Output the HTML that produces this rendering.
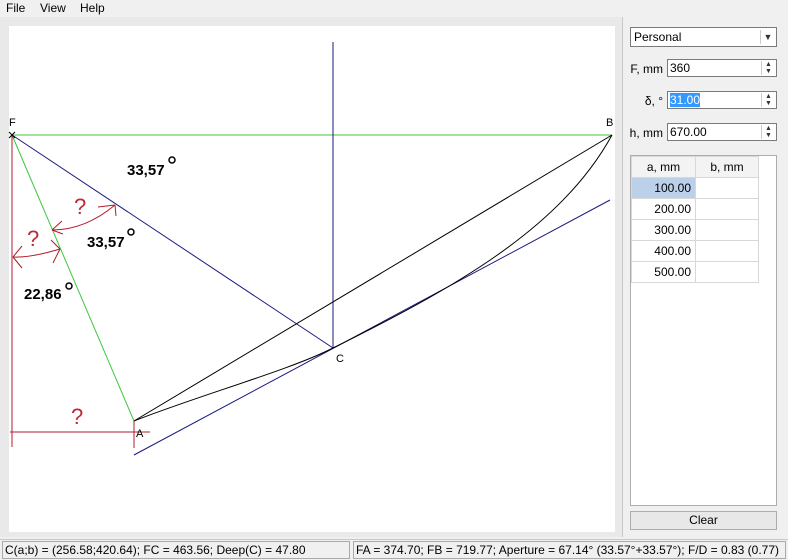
<!DOCTYPE html>
<html><head><style>
body{margin:0;width:788px;height:560px;overflow:hidden;background:#f0f0f0;font-family:"Liberation Sans",sans-serif;font-size:12px;position:relative}
.a{position:absolute}
.menu span{position:absolute;top:1px;font-size:12px}
.inp{position:absolute;background:#fff;border:1px solid #7a7a7a;height:18px;box-sizing:border-box;font-size:12px;line-height:16px;padding-left:2px}
.spin{position:absolute;right:1px;top:1px;width:13px;height:14px;border-left:1px solid #ccc;font-size:7px;line-height:7px;text-align:center;color:#333}
.lbl{position:absolute;font-size:12px;width:60px;text-align:right;left:603px}
table{border-collapse:collapse;font-size:12px}
td{border:1px solid #d8d8d8;height:21px;padding:0 4px;box-sizing:border-box}
</style></head><body>
<div class="menu"><span style="left:6px">File</span><span style="left:40px">View</span><span style="left:80px">Help</span></div>
<div class="a" style="left:0;top:17px;width:622px;height:520px;background:#e9e9e9"></div>
<div class="a" style="left:9px;top:26px;width:606px;height:506px;background:#fff"></div>
<div class="a" style="left:622px;top:17px;width:1px;height:520px;background:#c8c8c8"></div>
<svg class="a" style="left:0;top:0" width="622" height="540" font-family="Liberation Sans,sans-serif">
<line x1="12" y1="135" x2="612" y2="135" stroke="#3cc83c"/>
<line x1="12" y1="135" x2="134" y2="421" stroke="#3cc83c"/>
<line x1="12" y1="135" x2="333" y2="348" stroke="#1a1a80"/>
<line x1="333" y1="42" x2="333" y2="348" stroke="#1a1a80"/>
<line x1="134" y1="455" x2="610" y2="200" stroke="#1a1a80"/>
<line x1="134" y1="421" x2="612" y2="135" stroke="#000"/>
<path d="M134,421 C200,395 290,370 333,348 C450,290 560,230 612,135" fill="none" stroke="#000"/>
<line x1="12" y1="135" x2="12" y2="447" stroke="#b01c2c"/>
<line x1="10" y1="432" x2="150" y2="432" stroke="#b01c2c"/>
<line x1="134" y1="421" x2="134" y2="448" stroke="#b01c2c"/>
<path d="M13,257 Q30,258 60,249 M13,257 L22,246 M13,257 L22,268 M60,249 L51,240 M60,249 L53,263" fill="none" stroke="#b01c2c"/>
<path d="M52,230 Q85,230 115,205 M52,230 L62,221 M52,230 L63,234 M115,205 L98,207 M115,205 L116,216" fill="none" stroke="#b01c2c"/>
<g fill="#c0283a" font-size="22"><text x="74" y="214">?</text><text x="27" y="246">?</text><text x="71" y="424">?</text></g>
<g font-weight="bold" font-size="15"><text x="127" y="175">33,57</text><text x="87" y="247">33,57</text><text x="24" y="299">22,86</text></g>
<g fill="none" stroke="#000" stroke-width="1.5"><circle cx="172" cy="160" r="3"/><circle cx="131" cy="232" r="3"/><circle cx="69" cy="286" r="3"/></g>
<g font-size="11"><text x="9" y="126">F</text><text x="606" y="126">B</text><text x="336" y="362">C</text><text x="136" y="437">A</text></g>
<path d="M9,132 l6,6 M15,132 l-6,6" stroke="#000"/>
</svg>
<div class="inp" style="left:630px;top:27px;width:147px;height:20px;line-height:18px;padding-left:3px">Personal<div class="spin" style="top:2px;width:14px;font-size:9px;line-height:14px">▼</div></div>
<div class="lbl" style="top:62px">F, mm</div>
<div class="inp" style="left:667px;top:59px;width:110px">360<div class="spin">▲<br>▼</div></div>
<div class="lbl" style="top:94px">δ, °</div>
<div class="inp" style="left:667px;top:91px;width:110px"><span style="background:#3399ff;color:#fff">31.00</span><div class="spin">▲<br>▼</div></div>
<div class="lbl" style="top:126px">h, mm</div>
<div class="inp" style="left:667px;top:123px;width:110px">670.00<div class="spin">▲<br>▼</div></div>
<div class="a" style="left:630px;top:155px;width:147px;height:351px;background:#fff;border:1px solid #adadad;box-sizing:border-box">
<table style="position:absolute;left:0;top:0;width:128px">
<tr style="background:#f3f3f3"><td style="text-align:center;width:64px">a, mm</td><td style="text-align:center">b, mm</td></tr>
<tr><td style="text-align:right;background:#bcd0ea">100.00</td><td></td></tr>
<tr><td style="text-align:right">200.00</td><td></td></tr>
<tr><td style="text-align:right">300.00</td><td></td></tr>
<tr><td style="text-align:right">400.00</td><td></td></tr>
<tr><td style="text-align:right">500.00</td><td></td></tr>
</table></div>
<div class="a" style="left:630px;top:511px;width:147px;height:19px;border:1px solid #adadad;box-sizing:border-box;background:#e8e8e8;text-align:center;line-height:17px">Clear</div>
<div class="a" style="left:0;top:539px;width:788px;height:1px;background:#c8c8c8"></div>
<div class="a" style="left:2px;top:541px;width:348px;height:18px;border:1px solid #aaa;box-sizing:border-box;line-height:16px;padding-left:2px">C(a;b) = (256.58;420.64); FC = 463.56; Deep(C) = 47.80</div>
<div class="a" style="left:353px;top:541px;width:433px;height:18px;border:1px solid #aaa;box-sizing:border-box;line-height:16px;padding-left:2px">FA = 374.70; FB = 719.77; Aperture = 67.14° (33.57°+33.57°); F/D = 0.83 (0.77)</div>
</body></html>
